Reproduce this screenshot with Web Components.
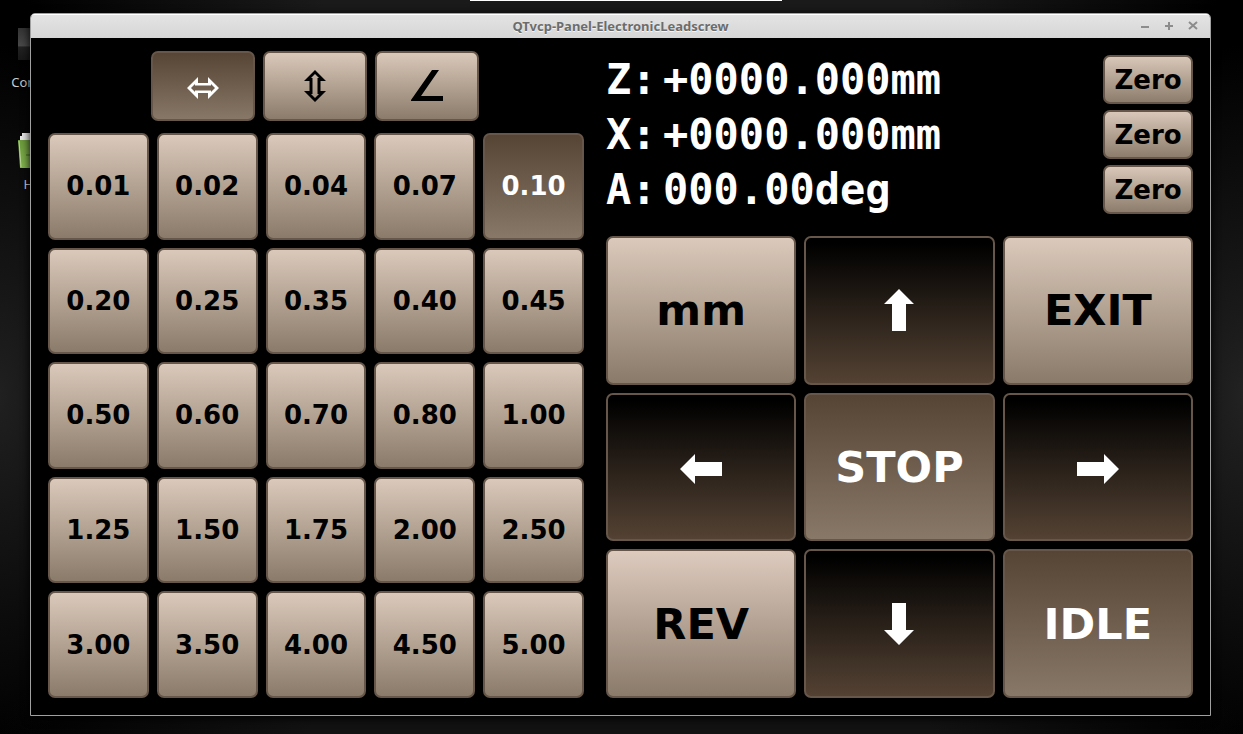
<!DOCTYPE html>
<html lang="en">
<head>
<meta charset="utf-8">
<title>QTvcp-Panel-ElectronicLeadscrew</title>
<style>
html, body { margin: 0; height: 100%; background: #000; }
body { font-family: "DejaVu Sans", sans-serif; }
</style>
</head>
<body>
<els-desktop>
  <desktop-icon slot="icon" kind="computer" label="Computer"></desktop-icon>
  <desktop-icon slot="icon" kind="home" label="Home"></desktop-icon>
  <app-window heading="QTvcp-Panel-ElectronicLeadscrew">
    <lead-panel></lead-panel>
  </app-window>
</els-desktop>
<script>
const attach = (el, html) => { el.attachShadow({ mode: "open" }).innerHTML = html; };

customElements.define("els-desktop", class extends HTMLElement {
  constructor() {
    super();
    attach(this, `<style>
      :host { display: block; box-sizing: border-box; position: relative; height: 100vh; padding: 13px 32px 18px 30px; overflow: hidden;
        background:
          radial-gradient(ellipse 48% 50% at 50% 0, #1a1a1a 50%, transparent),
          radial-gradient(ellipse 12% 48% at 0 54%, #202020, transparent),
          radial-gradient(ellipse 12% 48% at 100% 54%, #222, transparent),
          radial-gradient(ellipse 50% 20% at 50% 100%, #121212 50%, transparent),
          #000; }
      .taskbar { position: absolute; top: 0; left: 470px; width: 312px; height: 1px; background: #fff; }
      .icons { position: absolute; top: 27px; left: 0; width: 72px; display: flex; flex-direction: column; gap: 42px; }
      main { position: relative; height: 100%; }
    </style>
    <div class="taskbar"></div>
    <div class="icons"><slot name="icon"></slot></div>
    <main><slot></slot></main>`);
  }
});

customElements.define("desktop-icon", class extends HTMLElement {
  connectedCallback() {
    const art = {
      computer: [40, `<defs><linearGradient id="g" x2="0" y2="1"><stop stop-color="#333"/><stop offset=".55" stop-color="#484848"/><stop offset=".6" stop-color="#222"/><stop offset="1" stop-color="#181818"/></linearGradient></defs><rect x="2" y="1" width="44" height="32" fill="url(#g)"/>`],
      home: [36, `<defs><linearGradient id="g" x2="0" y2="1"><stop stop-color="#6b9a3c"/><stop offset="1" stop-color="#83b44f"/></linearGradient></defs><path d="M4 6V3H6V0H40V8H4Z" fill="#e8e8e8"/><path d="M2 7H42L40 35H4Z" fill="url(#g)"/><path d="M3 8L5 34" stroke="#b9d894" fill="none"/><path d="M10 22H20" stroke="#3f6a1e"/>`]
    };
    const [height, shapes] = art[this.getAttribute("kind")];
    attach(this, `<style>
      :host { display: flex; flex-direction: column; align-items: center; gap: 6px; color: #ccc; font: 13px/18px "Noto Sans", sans-serif; margin-left: 8px; }
      svg { display: block; }
      span { padding-left: 4px; }
    </style>
    <svg width="44" height="${height}" viewBox="2 0 44 ${height}" aria-hidden="true">${shapes}</svg>
    <span>${this.getAttribute("label")}</span>`);
  }
});

customElements.define("app-window", class extends HTMLElement {
  connectedCallback() {
    attach(this, `<style>
      :host { display: flex; flex-direction: column; box-sizing: border-box; height: 100%; border: 1px solid #a0a0a0; border-radius: 5px 5px 0 0; background: #000; overflow: hidden; box-shadow: 0 2px 10px #000; }
      header { display: grid; grid-template-columns: 1fr auto 1fr; align-items: center; height: 24px; background: linear-gradient(#e4e4e4, #d6d6d6); box-shadow: inset 0 1px #fff; }
      h1 { grid-column: 2; margin: 0; font: bold 13px/24px "Noto Sans", sans-serif; color: #6c6c6c; text-shadow: 0 1px #f4f4f4; }
      .controls { justify-self: end; display: flex; gap: 8px; padding-right: 9px; }
      button { border: 0; padding: 0; width: 16px; height: 16px; background: none; color: #8c8c8c; }
      svg { display: block; fill: none; stroke: currentColor; stroke-width: 2; }
      .body { flex: 1; min-height: 0; }
    </style>
    <header><h1>${this.getAttribute("heading")}</h1>
      <div class="controls">
        <button aria-label="Minimize"><svg width="16" height="16"><path d="M4 9H12"/></svg></button>
        <button aria-label="Maximize"><svg width="16" height="16"><path d="M4 8H12M8 4V12"/></svg></button>
        <button aria-label="Close"><svg width="16" height="16"><path d="M4 4L12 11M12 4L4 11"/></svg></button>
      </div></header>
    <div class="body"><slot></slot></div>`);
  }
});

customElements.define("panel-button", class extends HTMLElement {
  connectedCallback() {
    const pressed = this.hasAttribute("pressed");
    const name = this.getAttribute("name");
    attach(this, `<style>
      :host { display: grid; min-width: 0; min-height: 0; }
      button { box-sizing: border-box; min-width: 0; width: 100%; height: 100%; display: grid; place-items: center; padding: 0; border: 2px solid #66574a; border-radius: 7px;
        font: bold var(--label, 26px) "DejaVu Sans", sans-serif; color: #000;
        background: linear-gradient(#dccbbc, #897968) border-box; }
      :host([tone=pink]) button { background: linear-gradient(#dfccc0, #897968) border-box; }
      :host([pressed]) button { color: #fff; background: linear-gradient(#554334, #897968) border-box; }
      :host([tone=dark]) button { color: #fff; background: linear-gradient(#000 5%, #554334) border-box; }
    </style>
    <button${name ? ` aria-label="${name}"` : ""} aria-pressed="${pressed}"><slot></slot></button>`);
  }
});

customElements.define("arrow-icon", class extends HTMLElement {
  connectedCallback() {
    const shapes = {
      up: [30, 42, `<path d="M15 0L30 15H22V42H8V15H0Z"/>`],
      down: [30, 42, `<path d="M15 42L30 27H22V0H8V27H0Z"/>`],
      left: [42, 34, `<path d="M0 19L15 4V12H42V26H15V34Z"/>`],
      right: [42, 34, `<path d="M42 19L27 4V12H0V26H27V34Z"/>`],
      horizontal: [32, 26, `<path fill-rule="evenodd" d="M0 15L11 4V10H21V4L32 15L21 26V20H11V26ZM4 15L8 19V17.5H24V19L28 15L24 11V12.500H8V11Z"/>`],
      vertical: [22, 32, `<path fill-rule="evenodd" d="M11 0L22 11H16.500V21H22L11 32L0 21H5.500V11H0ZM11 4L7 8H8.500V24H7L11 28L15 24H13.500V8H15Z"/>`],
      angle: [32, 32, `<path d="M21 0H28L10 26H32V31H0V30Z"/>`]
    };
    const [w, h, path] = shapes[this.getAttribute("shape")];
    attach(this, `<style>:host, svg { display: block; } svg { fill: currentColor; }</style>
      <svg width="${w}" height="${h}" viewBox="0 0 ${w} ${h}" aria-hidden="true">${path}</svg>`);
  }
});

customElements.define("axis-readout", class extends HTMLElement {
  connectedCallback() {
    attach(this, `<style>
      :host { display: grid; grid-template-columns: 51px 1fr 90px; column-gap: 6px; align-items: center; height: 49px; color: #fff; font: bold 42px/48px "DejaVu Sans Mono", monospace; white-space: pre; }
      panel-button { height: 49px; }
    </style>
    <span>${this.getAttribute("axis")}:</span><span>${this.getAttribute("value")}</span><panel-button>Zero</panel-button>`);
  }
});

customElements.define("lead-panel", class extends HTMLElement {
  connectedCallback() {
    const feeds = "0.01 0.02 0.04 0.07 0.10 0.20 0.25 0.35 0.40 0.45 0.50 0.60 0.70 0.80 1.00 1.25 1.50 1.75 2.00 2.50 3.00 3.50 4.00 4.50 5.00".split(" ");
    attach(this, `<style>
      :host { display: grid; grid-template-columns: 536fr 587fr; column-gap: 22px; box-sizing: border-box; height: 100%; padding: 13px 17px 17px; }
      section { display: flex; flex-direction: column; min-width: 0; min-height: 0; }
      .modes { display: grid; grid-template-columns: repeat(3, 104px); grid-auto-rows: 70px; gap: 8px; justify-content: center; margin: 0 2px 12px 0; }
      .feeds, .jog { flex: 1; min-height: 0; display: grid; gap: 8px; }
      .feeds { grid-template: repeat(5, 1fr) / repeat(5, 1fr); }
      .jog { grid-template: repeat(3, 1fr) / repeat(3, 1fr); --label: 43px; }
      .readouts { display: grid; gap: 6px; padding: 4px 0 22px; }
    </style>
    <section>
      <div class="modes">
        <panel-button name="Z axis feed" pressed><arrow-icon shape="horizontal"></arrow-icon></panel-button>
        <panel-button name="X axis feed"><arrow-icon shape="vertical"></arrow-icon></panel-button>
        <panel-button name="Angle feed"><arrow-icon shape="angle"></arrow-icon></panel-button>
      </div>
      <div class="feeds">${feeds.map(f => `<panel-button${f === "0.10" ? " pressed" : ""}>${f}</panel-button>`).join("")}</div>
    </section>
    <section>
      <div class="readouts">
        <axis-readout axis="Z" value="+0000.000mm"></axis-readout>
        <axis-readout axis="X" value="+0000.000mm"></axis-readout>
        <axis-readout axis="A" value="000.00deg"></axis-readout>
      </div>
      <div class="jog">
        <panel-button>mm</panel-button>
        <panel-button tone="dark" name="Up"><arrow-icon shape="up"></arrow-icon></panel-button>
        <panel-button>EXIT</panel-button>
        <panel-button tone="dark" name="Left"><arrow-icon shape="left"></arrow-icon></panel-button>
        <panel-button pressed>STOP</panel-button>
        <panel-button tone="dark" name="Right"><arrow-icon shape="right"></arrow-icon></panel-button>
        <panel-button tone="pink">REV</panel-button>
        <panel-button tone="dark" name="Down"><arrow-icon shape="down"></arrow-icon></panel-button>
        <panel-button pressed>IDLE</panel-button>
      </div>
    </section>`);
  }
});
</script>
</body>
</html>
